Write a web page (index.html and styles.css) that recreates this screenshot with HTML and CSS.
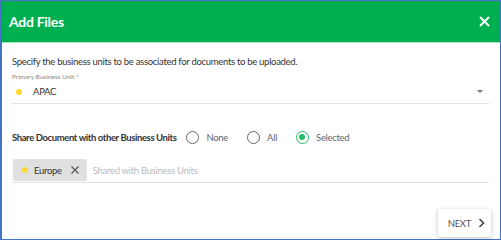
FILE: index.html
```html
<!DOCTYPE html>
<html lang="en">
<head>
  <meta charset="UTF-8" />
  <title>Add Files</title>
  <link rel="stylesheet" href="styles.css">
</head>
<body>
  <div class="dialog">
    <header class="dialog-header">
      <h1>Add Files</h1>
      <button class="close-btn" aria-label="Close">
        <svg width="11" height="11" viewBox="0 0 11 11"><path d="M1 1L10 10M10 1L1 10" stroke="#fff" stroke-width="2"/></svg>
      </button>
    </header>

    <div class="dialog-body">
      <p class="intro">Specify the business units to be associated for documents to be uploaded.</p>

      <div class="field">
        <label class="field-label">Primary Business Unit *</label>
        <div class="select">
          <span class="dot"></span>
          <span class="select-value">APAC</span>
          <span class="caret"></span>
        </div>
      </div>

      <div class="share-row">
        <span class="share-label">Share Document with other Business Units</span>
        <label class="radio"><span class="radio-circle"></span>None</label>
        <label class="radio"><span class="radio-circle"></span>All</label>
        <label class="radio checked"><span class="radio-circle"></span>Selected</label>
      </div>

      <div class="chips-field">
        <span class="chip">
          <span class="dot"></span>
          <span class="chip-text">Europe</span>
          <svg class="chip-x" width="8" height="8" viewBox="0 0 8 8"><path d="M0.5 0.5L7.5 7.5M7.5 0.5L0.5 7.5" stroke="#555" stroke-width="1.2"/></svg>
        </span>
        <span class="placeholder">Shared with Business Units</span>
      </div>
    </div>

    <footer class="dialog-footer">
      <button class="next-btn">NEXT
        <svg width="7" height="10" viewBox="0 0 7 10"><path d="M1.5 1L5.5 5L1.5 9" fill="none" stroke="#444" stroke-width="1.6"/></svg>
      </button>
    </footer>
  </div>
</body>
</html>
```

FILE: styles.css
```css
* {
  box-sizing: border-box;
}
body {
  margin: 0;
  font-family: 'Lato', sans-serif;
  color: #333;
  letter-spacing: -0.3px;
}
.dialog {
  width: 501px;
  height: 240px;
  border: 1px solid #4472c4;
  border-left-width: 2px;
  background: #fff;
  display: flex;
  flex-direction: column;
}
.dialog-header {
  height: 42px;
  background: #00b050;
  border-bottom: 1px solid #a8e6c0;
  display: flex;
  align-items: center;
  justify-content: space-between;
  padding: 0 10px 0 7px;
}
.dialog-header h1 {
  margin: 0;
  color: #fff;
  font-size: 14px;
  font-weight: 700;
  letter-spacing: -0.3px;
}
.close-btn {
  background: transparent;
  border: none;
  padding: 0;
  display: flex;
}
.dialog-body {
  padding: 12px 11px 0 10px;
  flex-grow: 1;
}
.intro {
  margin: 0;
  font-size: 9.5px;
  line-height: 14px;
  color: #333;
}
.field {
  margin-top: 3px;
}
.field-label {
  display: block;
  font-size: 6.5px;
  color: #888;
  line-height: 10px;
  letter-spacing: 0;
}
.select {
  display: flex;
  align-items: center;
  height: 22px;
  border-bottom: 1px solid #e2e2e2;
  padding: 0 6px 2px 4px;
}
.dot {
  width: 6px;
  height: 6px;
  border-radius: 50%;
  background: #fdd835;
  flex-shrink: 0;
}
.select-value {
  font-size: 9.5px;
  margin-left: 11px;
  flex-grow: 1;
}
.caret {
  width: 0;
  height: 0;
  border-left: 3px solid transparent;
  border-right: 3px solid transparent;
  border-top: 3px solid #777;
}
.share-row {
  display: flex;
  align-items: center;
  margin-top: 24px;
  height: 18px;
}
.share-label {
  font-size: 9.5px;
  font-weight: 700;
  letter-spacing: -0.4px;
  margin-right: 10px;
}
.radio {
  display: flex;
  align-items: center;
  font-size: 9.5px;
  color: #666;
  margin-right: 19px;
}
.radio-circle {
  width: 13px;
  height: 13px;
  border: 1.5px solid #666;
  border-radius: 50%;
  margin-right: 7px;
  position: relative;
}
.radio.checked .radio-circle {
  border-color: #1fbf68;
}
.radio.checked .radio-circle::after {
  content: '';
  position: absolute;
  left: 2px;
  top: 2px;
  width: 6px;
  height: 6px;
  border-radius: 50%;
  background: #1fbf68;
}
.chips-field {
  display: flex;
  align-items: center;
  margin-top: 13px;
  padding: 0 0 1px 1px;
  border-bottom: 1px solid #e2e2e2;
}
.chip {
  display: flex;
  align-items: center;
  background: #e0e0e0;
  border-radius: 2px;
  height: 22px;
  padding: 0 8px 0 9px;
}
.chip-text {
  font-size: 9.5px;
  margin-left: 6px;
  margin-right: 9px;
  color: #333;
}
.placeholder {
  font-size: 9.5px;
  color: #bbb;
  margin-left: 6px;
}
.dialog-footer {
  display: flex;
  justify-content: flex-end;
  padding: 0 9px 2px 0;
}
.next-btn {
  display: flex;
  align-items: center;
  gap: 7px;
  background: #fff;
  border: none;
  height: 28px;
  padding: 0 6px 0 10px;
  font-family: inherit;
  font-size: 9.5px;
  letter-spacing: -0.3px;
  color: #555;
  box-shadow: 0 1px 4px rgba(0,0,0,0.25);
  border-radius: 2px;
}
```
